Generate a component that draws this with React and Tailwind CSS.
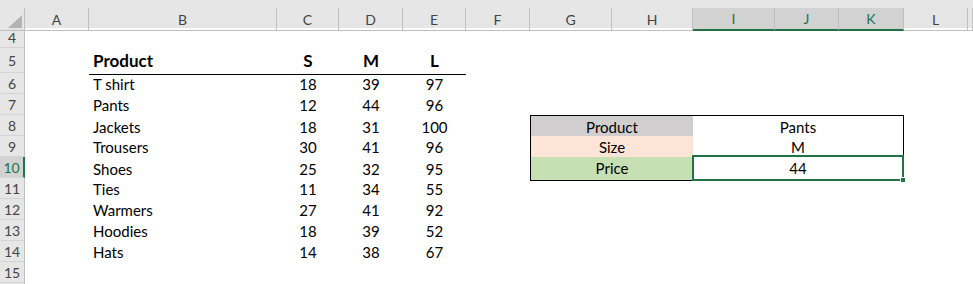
const GRID =
  "grid grid-cols-[25px_64px_188px_62px_64px_63px_64px_82px_81px_82px_64px_65px_64px_1fr]";

const letters = ["A", "B", "C", "D", "E", "F", "G", "H", "I", "J", "K", "L", ""];
const selectedCols = ["I", "J", "K"];

const products = [
  ["T shirt", 18, 39, 97],
  ["Pants", 12, 44, 96],
  ["Jackets", 18, 31, 100],
  ["Trousers", 30, 41, 96],
  ["Shoes", 25, 32, 95],
  ["Ties", 11, 34, 55],
  ["Warmers", 27, 41, 92],
  ["Hoodies", 18, 39, 52],
  ["Hats", 14, 38, 67],
];

// lookup box sits on rows 8..10
const lookup = {
  8: { label: "Product", value: "Pants", bg: "bg-[#d0cece]" },
  9: { label: "Size", value: "M", bg: "bg-[#fce4d6]" },
  10: { label: "Price", value: "44", bg: "bg-[#c6e0b4]" },
};

const RowHead = ({ n, h = "h-[21px]", active }) => (
  <div
    className={`${h} flex items-center justify-center text-[14px] border-b border-[#d4d4d4] ${
      active
        ? "bg-[#d2d2d2] text-[#217346] border-r-2 border-r-[#217346]"
        : "bg-[#e6e6e6] text-[#444] border-r border-r-[#bfbfbf]"
    }`}
  >
    {n}
  </div>
);

const Num = ({ v }) => (
  <div className="flex items-center justify-center">{v}</div>
);

const LookupCells = ({ row }) => {
  const l = lookup[row];
  const last = row === 10;
  return (
    <>
      <div
        className={`col-span-2 flex items-center justify-center ${l.bg} border-l border-black ${
          row === 8 ? "border-t" : ""
        } ${last ? "border-b" : ""} border-black`}
      >
        {l.label}
      </div>
      <div
        className={`relative col-span-3 flex items-center justify-center border-r border-black ${
          row === 8 ? "border-t" : ""
        } ${last ? "border-b" : ""}`}
      >
        {l.value}
        {last && (
          <>
            <div className="absolute -left-[1px] -top-[2px] -right-[1px] -bottom-[1px] border-2 border-[#217346]" />
            <div className="absolute -right-[3px] -bottom-[3px] w-[6px] h-[6px] bg-[#217346] border border-white" />
          </>
        )}
      </div>
      <div />
      <div />
    </>
  );
};

export default function App() {
  return (
    <div
      className="w-[973px] h-[284px] overflow-hidden bg-white text-black text-[15px]"
      style={{ fontFamily: "Lato, 'Open Sans', sans-serif" }}
    >
      <div className="h-[8px] bg-[#e6e6e6]" />
      <div className={`${GRID} h-[20px] bg-[#e6e6e6] text-[14px] text-[#444]`}>
        <div className="relative border-r border-b border-[#bfbfbf]">
          <svg className="absolute right-[2px] bottom-[2px]" width="14" height="13">
            <polygon points="14,0 14,13 0,13" fill="#b4b4b4" />
          </svg>
        </div>
        {letters.map((c, i) => {
          const sel = selectedCols.includes(c);
          return (
            <div
              key={i}
              className={`flex items-center justify-center border-r border-r-[#bfbfbf] ${
                sel
                  ? "bg-[#d2d2d2] text-[#217346] border-b-2 border-b-[#217346]"
                  : "border-b border-b-[#bfbfbf]"
              }`}
            >
              {c}
            </div>
          );
        })}
      </div>

      {/* row 4 */}
      <div className={`${GRID} h-[20px]`}>
        <RowHead n={4} h="h-[20px]" />
      </div>

      {/* row 5 header */}
      <div className={`${GRID} h-[25px]`}>
        <RowHead n={5} h="h-[25px]" />
        <div />
        <div className="flex items-center pl-[4px] border-b border-black font-bold text-[17px]">
          Product
        </div>
        <div className="flex items-center justify-center border-b border-black font-bold text-[17px]">
          S
        </div>
        <div className="flex items-center justify-center border-b border-black font-bold text-[17px]">
          M
        </div>
        <div className="flex items-center justify-center border-b border-black font-bold text-[17px]">
          L
        </div>
      </div>

      {products.map(([name, s, m, l], i) => {
        const row = i + 6;
        return (
          <div key={row} className={`${GRID} h-[21px]`}>
            <RowHead n={row} active={row === 10} />
            <div />
            <div className="flex items-center pl-[4px]">{name}</div>
            <Num v={s} />
            <Num v={m} />
            <Num v={l} />
            <div />
            {lookup[row] && <LookupCells row={row} />}
          </div>
        );
      })}

      <div className={`${GRID} h-[21px]`}>
        <RowHead n={15} />
      </div>
      <div className={`${GRID} h-[2px]`}>
        <div className="bg-[#e6e6e6] border-r border-[#bfbfbf]" />
      </div>
    </div>
  );
}
